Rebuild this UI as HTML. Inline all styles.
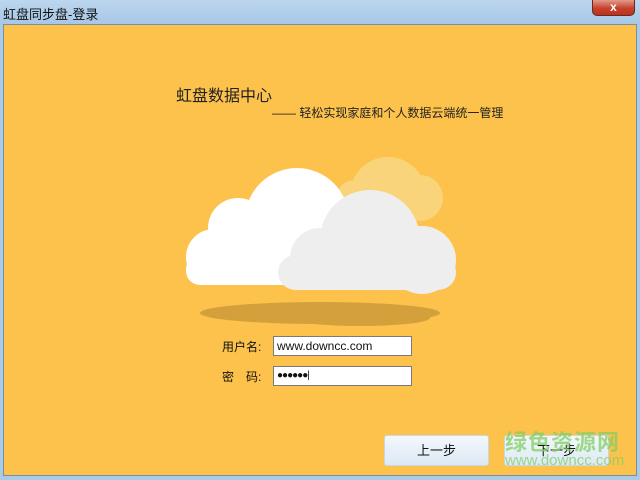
<!DOCTYPE html>
<html><head><meta charset="utf-8"><style>
*{margin:0;padding:0;box-sizing:border-box}
body{width:640px;height:480px;overflow:hidden;background:#a9cbe8;font-family:"Liberation Sans","Noto Sans CJK SC",sans-serif;position:relative}
.tb{position:absolute;left:0;top:0;width:640px;height:25px;background:linear-gradient(#bcd6ee,#a6c7e6)}
.title{position:absolute;left:3px;top:4px;font-size:13px;color:#111}
.close{position:absolute;left:592px;top:0;width:43px;height:16px;background:linear-gradient(#e19a8c,#c8412d 55%,#b8321f);border:1px solid #6b2a20;border-top:none;border-radius:0 0 5px 5px;color:#fff;font-size:12px;font-weight:bold;text-align:center;line-height:15px}
.main{position:absolute;left:3px;top:24px;width:634px;height:452px;background:#fdc24b;border:1px solid #7a8ea0}
.h1{position:absolute;left:176px;top:82px;font-size:16px;color:#222}
.h2{position:absolute;left:272px;top:104px;font-size:12px;color:#222}
.lbl{position:absolute;font-size:12px;color:#111}
.inp{position:absolute;left:273px;width:139px;height:20px;background:#fff;border:1px solid #7a7a7a;font-size:12px;padding-left:3px;line-height:18px;color:#111}
.btn{position:absolute;top:435px;width:105px;height:31px;border:1px solid #c9d7e4;border-radius:3px;background:linear-gradient(#f3f8fc,#dce9f4);font-size:13px;text-align:center;line-height:29px;color:#111}
.wm{position:absolute;left:505px;top:425px;color:rgba(130,205,100,.75);font-size:22px;font-weight:bold;letter-spacing:1px}
.wm2{position:absolute;left:505px;top:452px;color:rgba(130,205,100,.75);font-size:15px}
</style></head><body>
<div class="tb"></div>
<div class="title">虹盘同步盘-登录</div>
<div class="close">x</div>
<div class="main"></div>
<div class="h1">虹盘数据中心</div>
<div class="h2">—— 轻松实现家庭和个人数据云端统一管理</div>
<svg style="position:absolute;left:0;top:0" width="640" height="480">
<ellipse cx="320" cy="313" rx="120" ry="11" fill="#d3a03c"/>
<ellipse cx="360" cy="318" rx="70" ry="8" fill="#d3a03c"/>
<g fill="#f9d47a">
<circle cx="388" cy="195" r="38"/><circle cx="420" cy="198" r="23"/><circle cx="355" cy="200" r="20"/>
</g>
<g fill="#fff">
<circle cx="297" cy="220" r="52"/><circle cx="238" cy="228" r="30"/><circle cx="214" cy="257" r="28"/>
<rect x="214" y="230" width="120" height="55"/><rect x="186" y="255" width="60" height="30" rx="14"/>
</g>
<g fill="#eeeeee">
<circle cx="370" cy="240" r="50"/><circle cx="320" cy="258" r="30"/><circle cx="422" cy="260" r="34"/>
<rect x="278" y="255" width="178" height="35" rx="18"/>
</g>
</svg>
<div class="lbl" style="left:222px;top:338px">用户名:</div>
<div class="lbl" style="left:222px;top:368px">密　码:</div>
<div class="inp" style="top:336px">www.downcc.com</div>
<div class="inp" style="top:366px;font-size:10px;letter-spacing:-1px">●●●●●●|</div>
<div class="btn" style="left:384px">上一步</div>
<div class="btn" style="left:504px">下一步</div>
<div class="wm">绿色资源网</div>
<div class="wm2">www.downcc.com</div>
</body></html>
